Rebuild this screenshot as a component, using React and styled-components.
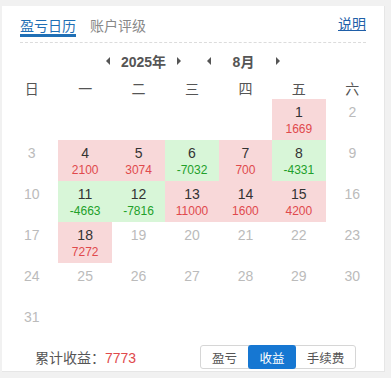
import styled, { createGlobalStyle } from "styled-components";

const GlobalStyle = createGlobalStyle`
  body {
    margin: 0;
    background: #f1f1f1;
    font-family: "Liberation Sans", "Noto Sans CJK SC", sans-serif;
  }
`;

const Card = styled.div`
  margin: 6px 0 0 2px;
  width: 383px;
  height: 366px;
  box-sizing: border-box;
  background: #fff;
  border: 1px solid #e6e6e6;
  border-top: none;
  border-left: none;
  display: flex;
  flex-direction: column;
`;

const TabBar = styled.div`
  margin: 0 18px;
  height: 36px;
  display: flex;
  align-items: flex-end;
  border-bottom: 1px dashed #dcdcdc;
`;

const Tab = styled.div`
  font-size: 14px;
  line-height: 16px;
  margin-bottom: 5px;
  margin-right: 14px;
  color: ${(p) => (p.$active ? "#1f6fb5" : "#888")};
  border-bottom: 3px solid ${(p) => (p.$active ? "#1f6fb5" : "transparent")};
`;

const Help = styled.a`
  margin-left: auto;
  margin-bottom: 10px;
  font-size: 14px;
  line-height: 16px;
  color: #1f5fa8;
  text-decoration: underline;
`;

const Picker = styled.div`
  margin-top: 8px;
  height: 20px;
  display: flex;
  align-items: center;
  justify-content: center;
  gap: 26px;
  font-size: 14px;
  font-weight: bold;
  color: #555;
`;

const Group = styled.div`
  display: flex;
  align-items: center;
`;

const Caret = styled.span`
  width: 0;
  height: 0;
  border-top: 4px solid transparent;
  border-bottom: 4px solid transparent;
  ${(p) =>
    p.$dir === "left"
      ? "border-right: 4px solid #555;"
      : "border-left: 4px solid #555;"}
`;

const Label = styled.span`
  width: ${(p) => p.$w}px;
  text-align: center;
`;

const Grid = styled.div`
  margin: 0 5px 0 3px;
  display: grid;
  grid-template-columns: repeat(7, 1fr);
`;

const WeekDay = styled.div`
  margin-top: 8px;
  height: 20px;
  line-height: 20px;
  text-align: center;
  font-size: 14px;
  color: #555;
`;

const Cell = styled.div`
  height: 41px;
  text-align: center;
  background: ${(p) =>
    p.$v == null ? "transparent" : p.$v >= 0 ? "#f8d8d9" : "#d8f6d8"};
`;

const Day = styled.div`
  padding-top: 4px;
  font-size: 14px;
  line-height: 18px;
  color: ${(p) => (p.$has ? "#333" : "#bbb")};
`;

const Value = styled.div`
  font-size: 12px;
  line-height: 16px;
  color: ${(p) => (p.$v >= 0 ? "#e0494c" : "#22a02a")};
`;

const Footer = styled.div`
  margin: 0 28px 0 33px;
  height: 24px;
  display: flex;
  align-items: center;
  justify-content: space-between;
`;

const Total = styled.div`
  font-size: 14px;
  color: #555;
  span {
    color: #e0494c;
  }
`;

const Segments = styled.div`
  display: flex;
  height: 24px;
  box-sizing: border-box;
  border: 1px solid #d6d6d6;
  border-radius: 3px;
`;

const Seg = styled.div`
  width: ${(p) => p.$w}px;
  display: flex;
  align-items: center;
  justify-content: center;
  font-size: 12.5px;
  border-radius: 3px;
  margin: -1px 0;
  color: ${(p) => (p.$active ? "#fff" : "#555")};
  background: ${(p) => (p.$active ? "#1677d2" : "transparent")};
`;

const values = {
  1: 1669, 4: 2100, 5: 3074, 6: -7032, 7: 700, 8: -4331,
  11: -4663, 12: -7816, 13: 11000, 14: 1600, 15: 4200, 18: 7272,
};

const weekDays = ["日", "一", "二", "三", "四", "五", "六"];

export default function App() {
  const cells = [];
  for (let i = 0; i < 5; i++) cells.push(null);
  for (let d = 1; d <= 31; d++) cells.push(d);

  return (
    <>
      <GlobalStyle />
      <Card>
        <TabBar>
          <Tab $active>盈亏日历</Tab>
          <Tab>账户评级</Tab>
          <Help>说明</Help>
        </TabBar>
        <Picker>
          <Group>
            <Caret $dir="left" />
            <Label $w={67}>2025年</Label>
            <Caret />
          </Group>
          <Group>
            <Caret $dir="left" />
            <Label $w={65}>8月</Label>
            <Caret />
          </Group>
        </Picker>
        <Grid>
          {weekDays.map((w) => (
            <WeekDay key={w}>{w}</WeekDay>
          ))}
          {cells.map((d, i) =>
            d == null ? (
              <Cell key={"e" + i} />
            ) : (
              <Cell key={d} $v={values[d]}>
                <Day $has={values[d] != null}>{d}</Day>
                {values[d] != null && <Value $v={values[d]}>{values[d]}</Value>}
              </Cell>
            )
          )}
        </Grid>
        <Footer>
          <Total>
            累计收益：<span>7773</span>
          </Total>
          <Segments>
            <Seg $w={47}>盈亏</Seg>
            <Seg $w={48} $active>收益</Seg>
            <Seg $w={59}>手续费</Seg>
          </Segments>
        </Footer>
      </Card>
    </>
  );
}
